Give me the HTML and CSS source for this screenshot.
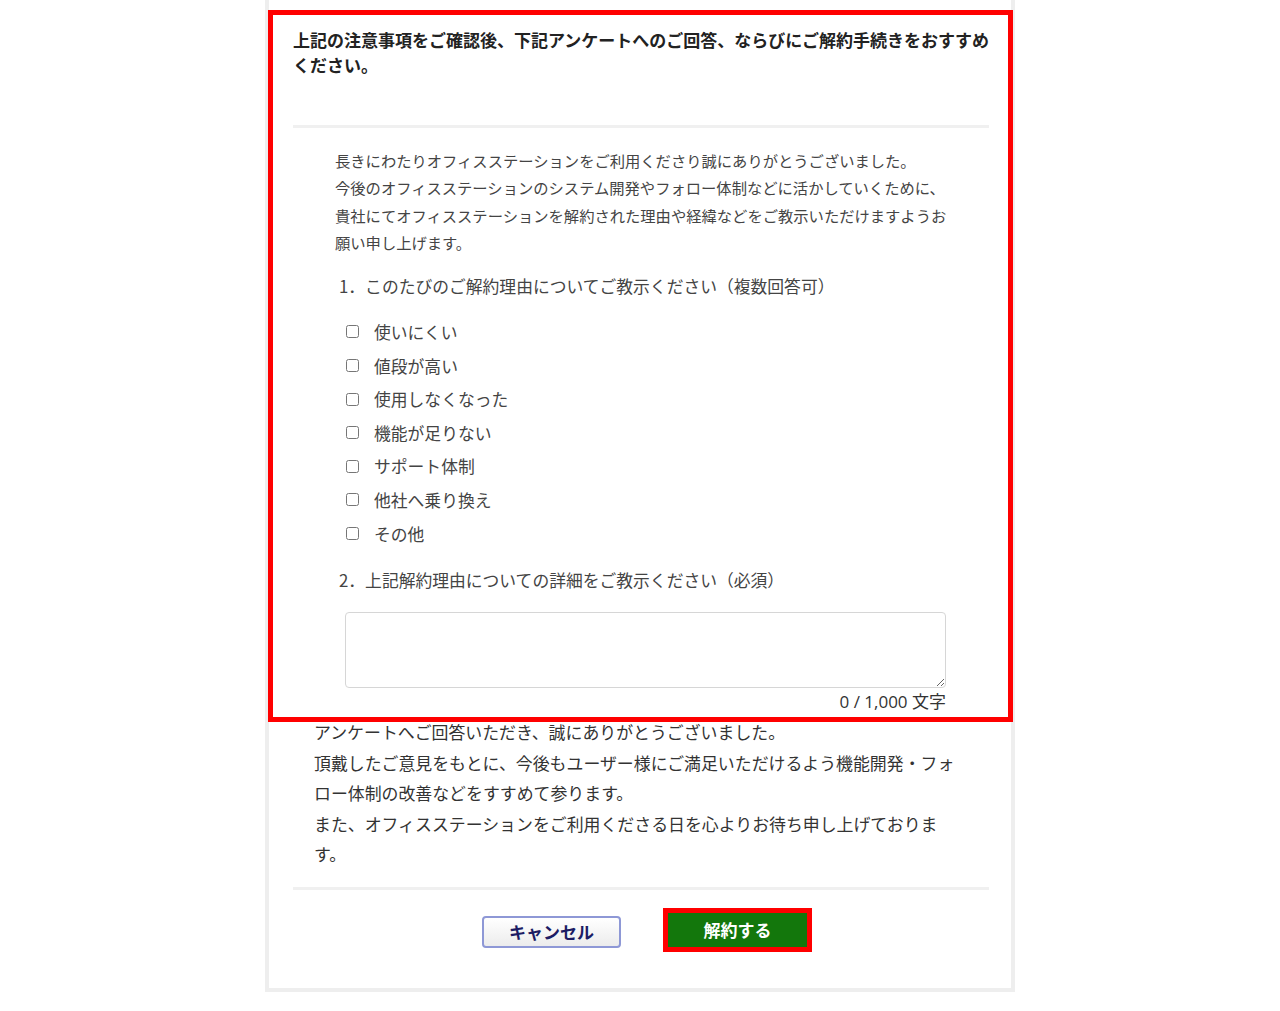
FILE: index.html
```html
<!DOCTYPE html>
<html lang="ja">
<head>
    <meta charset="UTF-8">
    <meta name="viewport" content="width=device-width, initial-scale=1.0">
    <title>解約手続き</title>
    <link rel="stylesheet" href="styles.css">
</head>
<body>
    <div class="panel">
        <div class="highlight-box"></div>

        <h2 class="lead">上記の注意事項をご確認後、下記アンケートへのご回答、ならびにご解約手続きをおすすめ<br>ください。</h2>

        <div class="divider"></div>

        <div class="survey">
            <p class="intro">
                長きにわたりオフィスステーションをご利用くださり誠にありがとうございました。<br>
                今後のオフィスステーションのシステム開発やフォロー体制などに活かしていくために、<br>
                貴社にてオフィスステーションを解約された理由や経緯などをご教示いただけますようお<br>
                願い申し上げます。
            </p>

            <div class="question">1．このたびのご解約理由についてご教示ください（複数回答可）</div>
            <ul class="choices">
                <li><label><input type="checkbox"> 使いにくい</label></li>
                <li><label><input type="checkbox"> 値段が高い</label></li>
                <li><label><input type="checkbox"> 使用しなくなった</label></li>
                <li><label><input type="checkbox"> 機能が足りない</label></li>
                <li><label><input type="checkbox"> サポート体制</label></li>
                <li><label><input type="checkbox"> 他社へ乗り換え</label></li>
                <li><label><input type="checkbox"> その他</label></li>
            </ul>

            <div class="question">2．上記解約理由についての詳細をご教示ください（必須）</div>
            <div class="detail">
                <textarea id="reasonDetail" class="detail-input" maxlength="1000"></textarea>
                <div class="counter"><span id="charCount">0</span> / 1,000 文字</div>
            </div>
        </div>

        <p class="thanks">
            アンケートへご回答いただき、誠にありがとうございました。<br>
            頂戴したご意見をもとに、今後もユーザー様にご満足いただけるよう機能開発・フォ<br>
            ロー体制の改善などをすすめて参ります。<br>
            また、オフィスステーションをご利用くださる日を心よりお待ち申し上げておりま<br>
            す。
        </p>

        <div class="divider"></div>

        <div class="actions">
            <button type="button" class="cancel-btn">キャンセル</button>
            <button type="button" class="submit-btn">解約する</button>
        </div>
    </div>

    <script>
        const detail = document.getElementById('reasonDetail');
        detail.addEventListener('input', function() {
            document.getElementById('charCount').textContent = detail.value.length.toLocaleString();
        });
    </script>
</body>
</html>
```

FILE: styles.css
```css
* {
    margin: 0;
    padding: 0;
    box-sizing: border-box;
}

body {
    font-family: "Noto Sans CJK JP", "Noto Sans", sans-serif;
    background: #fff;
    color: #333;
}

.panel {
    position: relative;
    width: 750px;
    margin-left: 265px;
    padding: 27px 22px 40px 24px;
    border: 4px solid #eeeeee;
    border-top: none;
    background: #fff;
}

/* red annotation frame over the survey area */
.highlight-box {
    position: absolute;
    left: -1px;
    top: 10px;
    width: 745px;
    height: 712px;
    border: 5px solid #ff0000;
    pointer-events: none;
}

.lead {
    font-size: 17px;
    line-height: 25px;
    font-weight: bold;
    color: #222;
    white-space: nowrap;
    margin-bottom: 48px;
}

.divider {
    height: 3px;
    background: #f0f0f0;
}

.survey {
    padding-top: 19px;
}

.intro {
    margin-left: 42px;
    font-size: 15.3px;
    line-height: 27.3px;
    color: #444;
    white-space: nowrap;
}

.question {
    margin: 18px 0 0 46px;
    font-size: 16.8px;
    line-height: 24px;
    color: #444;
}

.choices {
    list-style: none;
    margin: 17px 0 17px 53px;
}

.choices li {
    height: 33.6px;
    display: flex;
    align-items: center;
}

.choices label {
    display: flex;
    align-items: center;
    gap: 15px;
    font-size: 16.8px;
    color: #444;
}

.choices input {
    width: 13px;
    height: 13px;
    margin: 0;
}

.detail {
    width: 601px;
    margin: 20px 0 0 52px;
}

.detail-input {
    display: block;
    width: 100%;
    height: 76px;
    border: 1px solid #d6d6d6;
    border-radius: 4px;
    font-family: inherit;
    font-size: 15px;
    padding: 6px 8px;
}

.counter {
    margin-top: 2px;
    text-align: right;
    font-family: "Open Sans", "Noto Sans CJK JP", sans-serif;
    font-size: 17px;
    line-height: 24px;
    color: #333;
}

.thanks {
    margin: 3px 0 17px 21px;
    font-size: 16.9px;
    line-height: 30.5px;
    color: #333;
    white-space: nowrap;
}

.actions {
    display: flex;
    justify-content: center;
    align-items: flex-start;
    gap: 47px;
    margin-top: 23px;
    padding-left: 7px;
}

.cancel-btn {
    width: 139px;
    height: 32px;
    margin-top: 3px;
    border: 2px solid #8e98d6;
    border-radius: 4px;
    background: linear-gradient(#ffffff, #ececec);
    color: #1c1c64;
    font-family: inherit;
    font-size: 17px;
    font-weight: bold;
    cursor: pointer;
}

.submit-btn {
    width: 139px;
    height: 34px;
    border: none;
    background: #13770c;
    color: #fff;
    font-family: inherit;
    font-size: 17px;
    font-weight: bold;
    outline: 5px solid #ff0000;
    cursor: pointer;
}
```
